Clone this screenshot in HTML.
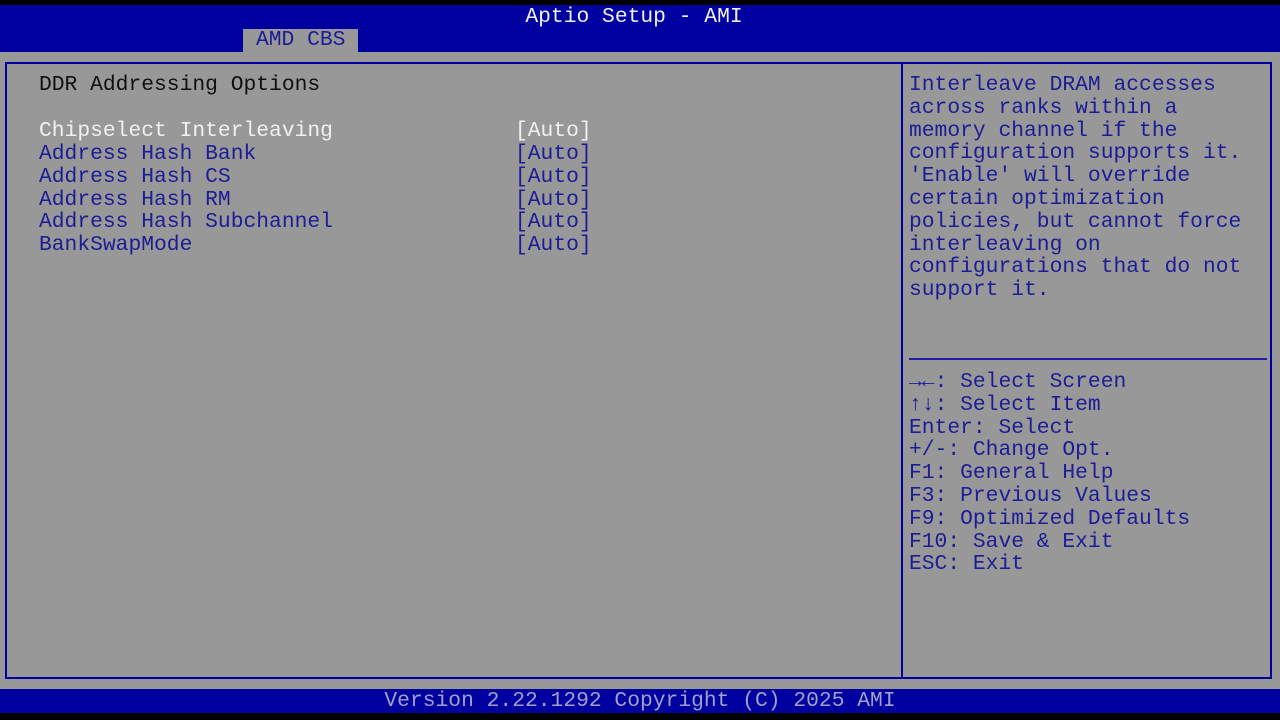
<!DOCTYPE html><html><head><style>
body{margin:0;width:1280px;height:720px;background:#000;position:relative;overflow:hidden;font-family:"Liberation Mono",monospace;font-size:21.3px;}
.a{position:absolute;white-space:pre;line-height:22.8px}
.b{color:#1c1c96}.w{color:#f0f0f0}
</style></head><body>
<div style="position:absolute;left:0;top:5px;width:1280px;height:47px;background:#0000a0"></div>
<div class="a w" style="left:0;width:1268px;text-align:center;top:6px">Aptio Setup - AMI</div>
<div style="position:absolute;left:243px;top:29px;width:115px;height:23px;background:#989898"></div>
<div class="a b" style="left:256px;top:29px">AMD CBS</div>
<div style="position:absolute;left:0;top:52px;width:1280px;height:637px;background:#989898"></div>
<div style="position:absolute;left:5px;top:62px;width:894px;height:613px;border:2px solid #0000a0"></div>
<div style="position:absolute;left:901px;top:62px;width:369px;height:613px;border:2px solid #0000a0;border-left:none"></div>
<div style="position:absolute;left:909px;top:358px;width:358px;height:2px;background:#2020a0"></div>
<div class="a" style="left:39px;top:74px;color:#101010">DDR Addressing Options</div>
<div class="a w" style="left:39px;top:120px">Chipselect Interleaving</div>
<div class="a w" style="left:515px;top:120px">[Auto]</div>
<div class="a b" style="left:39px;top:143px">Address Hash Bank
Address Hash CS
Address Hash RM
Address Hash Subchannel
BankSwapMode</div>
<div class="a b" style="left:515px;top:143px">[Auto]
[Auto]
[Auto]
[Auto]
[Auto]</div>
<div class="a b" style="left:909px;top:74px">Interleave DRAM accesses
across ranks within a
memory channel if the
configuration supports it.
'Enable' will override
certain optimization
policies, but cannot force
interleaving on
configurations that do not
support it.</div>
<div class="a b" style="left:909px;top:371px"><b>→←</b>: Select Screen
<b>↑↓</b>: Select Item
Enter: Select
+/-: Change Opt.
F1: General Help
F3: Previous Values
F9: Optimized Defaults
F10: Save &amp; Exit
ESC: Exit</div>
<div style="position:absolute;left:0;top:689px;width:1280px;height:24px;background:#0000a0"></div>
<div class="a" style="left:0;width:1280px;text-align:center;top:690px;color:#a0a0c8">Version 2.22.1292 Copyright (C) 2025 AMI</div>
</body></html>
